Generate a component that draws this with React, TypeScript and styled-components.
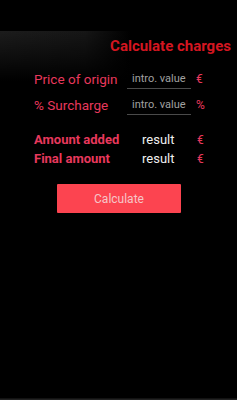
import React from 'react';
import styled, { createGlobalStyle } from 'styled-components';

const GlobalStyle = createGlobalStyle`
    html, body {
        margin: 0;
        padding: 0;
        background: #000000;
    }
    * {
        box-sizing: border-box;
    }
`

const App: React.FC = () => {
    return (
        <>
            <GlobalStyle />
            <Screen>
                <Header>
                    <Title>Calculate charges</Title>
                </Header>
                <Form>
                    <InputRow>
                        <Label>Price of origin</Label>
                        <Field placeholder="intro. value" />
                        <Unit>€</Unit>
                    </InputRow>
                    <InputRow>
                        <Label>% Surcharge</Label>
                        <Field placeholder="intro. value" />
                        <Unit>%</Unit>
                    </InputRow>
                </Form>
                <Results>
                    <ResultRow>
                        <Label bold>Amount added</Label>
                        <Value>result</Value>
                        <Unit>€</Unit>
                    </ResultRow>
                    <ResultRow>
                        <Label bold>Final amount</Label>
                        <Value>result</Value>
                        <Unit>€</Unit>
                    </ResultRow>
                </Results>
                <ButtonWrap>
                    <Button>Calculate</Button>
                </ButtonWrap>
                <BottomEdge />
            </Screen>
        </>
    );
};

export default App;

const Screen = styled.div`
    width: 237px;
    height: 400px;
    display: flex;
    flex-direction: column;
    font-family: Roboto, "Liberation Sans", sans-serif;
    background-color: #000000;
    background-image:
        linear-gradient(to bottom, rgba(0,0,0,0) 0px, #000000 50px),
        linear-gradient(to right, #1c1c1c 0px, #161616 85px, #000000 130px);
    background-position: 0 31px, 0 31px;
    background-size: 237px 60px, 237px 60px;
    background-repeat: no-repeat;
`
const Header = styled.div`
    display: flex;
    justify-content: flex-end;
    padding: 37px 6px 0 0;
    height: 56px;
`
const Title = styled.div`
    color: #d41620;
    font-size: 15px;
    font-weight: 700;
    line-height: 18px;
`
const Form = styled.div`
    display: flex;
    flex-direction: column;
    gap: 4px;
    padding: 12px 0 0 34px;
`
const InputRow = styled.div`
    display: grid;
    grid-template-columns: 93px 64px auto;
    align-items: center;
    height: 22px;
`
const Label = styled.div<{ bold?: boolean }>`
    color: #e8385c;
    font-size: ${p => p.bold ? '13px' : '13.5px'};
    font-weight: ${p => p.bold ? 700 : 400};
    white-space: nowrap;
    line-height: 16px;
`
const Field = styled.input`
    width: 64px;
    height: 20px;
    background: transparent;
    border: none;
    border-bottom: 1px solid #4a4a4a;
    color: #cfcfcf;
    font-family: Roboto, "Liberation Sans", sans-serif;
    font-size: 11px;
    padding: 0 0 0 5px;
    outline: none;
    &::placeholder {
        color: #a0a0a0;
    }
`
const Unit = styled.div`
    color: #e8385c;
    font-size: 12px;
    padding-left: 5px;
    line-height: 16px;
`
const Results = styled.div`
    display: flex;
    flex-direction: column;
    gap: 3px;
    padding: 16px 0 0 34px;
`
const ResultRow = styled.div`
    display: grid;
    grid-template-columns: 108px 50px auto;
    align-items: center;
    height: 16px;
`
const Value = styled.div`
    color: #f0f0f0;
    font-size: 13px;
    line-height: 16px;
`
const ButtonWrap = styled.div`
    display: flex;
    padding: 17px 0 0 57px;
`
const Button = styled.button`
    width: 124px;
    height: 29px;
    background-color: #fc4450;
    border: none;
    border-radius: 1px;
    color: #f6c6c8;
    font-family: Roboto, "Liberation Sans", sans-serif;
    font-size: 12px;
    padding: 0;
    cursor: pointer;
`
const BottomEdge = styled.div`
    margin-top: auto;
    height: 2px;
    background: linear-gradient(to bottom, #0a0a0a, #2a2a2a);
`
